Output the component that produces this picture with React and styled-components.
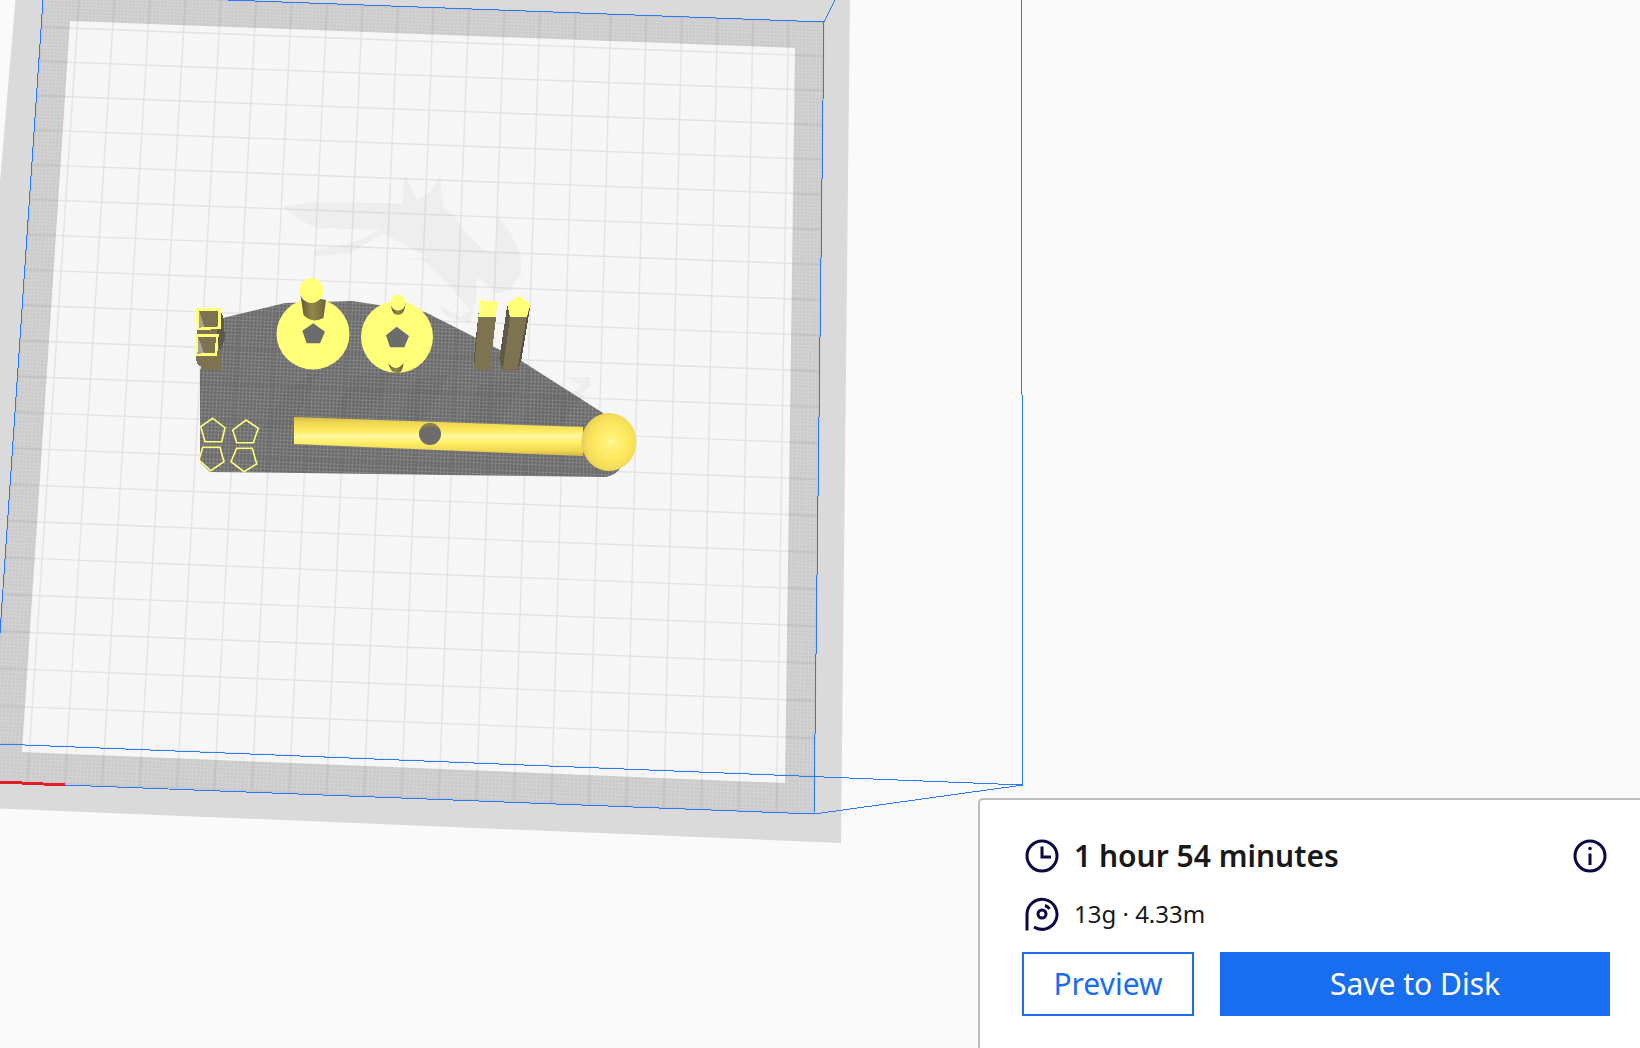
import React from "react";
import styled, { createGlobalStyle } from "styled-components";

const GlobalStyle = createGlobalStyle`
  html, body {
    margin: 0;
    padding: 0;
    background: #fafafa;
    font-family: "Noto Sans", "Open Sans", sans-serif;
  }
`;

const Page = styled.div`
  position: relative;
  width: 1640px;
  height: 1048px;
  overflow: hidden;
  background: #fafafa;
`;

const Viewport = styled.svg`
  display: block;
  width: 1640px;
  height: 1048px;
`;

const Panel = styled.section`
  position: absolute;
  right: 0;
  bottom: 0;
  box-sizing: border-box;
  width: 662px;
  height: 250px;
  padding: 39px 30px 0 42px;
  background: #ffffff;
  border: 2px solid #bcbcbc;
  border-right: none;
  border-bottom: none;
  border-top-left-radius: 5px;
  display: flex;
  flex-direction: column;
`;

const InfoRow = styled.div`
  display: flex;
  align-items: center;
  height: 33px;
  padding: 0 3px 0 3px;
  margin-bottom: ${(props) => props.$gap}px;
  color: #191919;
`;

const IconBox = styled.svg`
  flex: none;
  width: 34px;
  height: 34px;
  color: #0a0840;
`;

const Duration = styled.span`
  flex: 1;
  margin-left: 15px;
  font-size: 30px;
  font-weight: 600;
  line-height: 33px;
  white-space: nowrap;
`;

const Material = styled.span`
  margin-left: 15px;
  font-size: 24px;
  line-height: 33px;
  white-space: nowrap;
`;

const Actions = styled.div`
  display: flex;
  gap: 26px;
  height: 64px;
`;

const ActionButton = styled.button`
  box-sizing: border-box;
  width: ${(props) => (props.$primary ? 390 : 172)}px;
  height: 64px;
  padding: 0;
  border: 2px solid #196ef0;
  border-radius: 0;
  background: ${(props) => (props.$primary ? "#196ef0" : "#ffffff")};
  color: ${(props) => (props.$primary ? "#ffffff" : "#196ef0")};
  font-family: inherit;
  font-size: 30px;
  line-height: 1;
`;

// square -> quad homography, so the bed grid gets the same perspective as the shot
const makeProjector = ([p0, p1, p2, p3]) => {
  const dx1 = p1[0] - p2[0];
  const dx2 = p3[0] - p2[0];
  const dx3 = p0[0] - p1[0] + p2[0] - p3[0];
  const dy1 = p1[1] - p2[1];
  const dy2 = p3[1] - p2[1];
  const dy3 = p0[1] - p1[1] + p2[1] - p3[1];
  const den = dx1 * dy2 - dx2 * dy1;
  const g = (dx3 * dy2 - dx2 * dy3) / den;
  const h = (dx1 * dy3 - dx3 * dy1) / den;
  const a = p1[0] - p0[0] + g * p1[0];
  const b = p3[0] - p0[0] + h * p3[0];
  const d = p1[1] - p0[1] + g * p1[1];
  const e = p3[1] - p0[1] + h * p3[1];
  return (u, v) => {
    const w = g * u + h * v + 1;
    return [(a * u + b * v + p0[0]) / w, (d * u + e * v + p0[1]) / w];
  };
};

const BED = [
  [44, -7],
  [824, 22],
  [814, 814],
  [-10, 781],
];
const project = makeProjector(BED);

const gridPath = (count) => {
  let d = "";
  for (let i = 0; i <= count; i++) {
    const t = i / count;
    const [ax, ay] = project(t, 0);
    const [bx, by] = project(t, 1);
    const [cx, cy] = project(0, t);
    const [ex, ey] = project(1, t);
    d += `M${ax.toFixed(1)} ${ay.toFixed(1)}L${bx.toFixed(1)} ${by.toFixed(1)}`;
    d += `M${cx.toFixed(1)} ${cy.toFixed(1)}L${ex.toFixed(1)} ${ey.toFixed(1)}`;
  }
  return d;
};

const FINE_GRID = gridPath(220);
const COARSE_GRID = gridPath(22);

const pts = (list) => list.join(" ");
// zoom crops were read at 3x, this maps them back to page pixels
const crop = (ox, oy, list) =>
  list.map(([x, y]) => `${(ox + x / 3).toFixed(1)},${(oy + y / 3).toFixed(1)}`).join(" ");

const Z2 = [170, 260];
const Z3 = [400, 260];
const Z8 = [270, 160];
const Z9 = [190, 295];

const YELLOW = "#ffff78";
const OLIVE = "#7d7350";
const OLIVE_DARK = "#5f5a48";
const SHADOW = "#6c6c6c";
const BLUE = "#2a7bf6";

const PENTAGONS = [
  [[128, 475], [165, 503], [155, 545], [105, 545], [92, 500]],
  [[228, 480], [265, 505], [250, 548], [200, 548], [188, 510]],
  [[98, 562], [150, 562], [162, 605], [122, 632], [87, 600]],
  [[200, 565], [247, 565], [260, 612], [222, 635], [183, 605]],
];

const WIRE_LINES = [
  [43, 0, 0, 633],
  [228, 0, 824, 22],
  [824, 22, 835, 0],
  [824, 22, 814, 814],
  [1021, 0, 1023, 785],
  [0, 744, 1023, 785],
  [65, 785, 814, 814],
  [814, 814, 1023, 785],
];

const BedScene = () => (
  <Viewport viewBox="0 0 1640 1048">
    <defs>
      <linearGradient id="rod" x1="0" y1="0" x2="0" y2="1">
        <stop offset="0" stopColor="#d6ba46" />
        <stop offset="0.14" stopColor="#efd652" />
        <stop offset="0.34" stopColor="#fdea5c" />
        <stop offset="0.5" stopColor="#fff9a0" />
        <stop offset="0.66" stopColor="#ffef66" />
        <stop offset="0.86" stopColor="#f0d852" />
        <stop offset="1" stopColor="#d2b644" />
      </linearGradient>
      <radialGradient id="ball" cx="0.54" cy="0.5" r="0.55">
        <stop offset="0" stopColor="#fffbb0" />
        <stop offset="0.14" stopColor="#fff27a" />
        <stop offset="0.55" stopColor="#fde95f" />
        <stop offset="0.85" stopColor="#f3db5a" />
        <stop offset="1" stopColor="#e0c756" />
      </radialGradient>
      <linearGradient id="post" x1="0" y1="0" x2="1" y2="0">
        <stop offset="0" stopColor="#5f5838" />
        <stop offset="0.45" stopColor="#94864c" />
        <stop offset="1" stopColor="#6d653f" />
      </linearGradient>
    </defs>

    {/* disallowed area + bed */}
    <polygon points={pts(["16,-7", "850,-7", "841,843", "-10,808", "-10,300"])} fill="#dadada" />
    <polygon points={pts(BED.map((p) => p.join(",")))} fill="#cbcbcb" />
    <polygon points={pts(["70,21", "795,48", "785,783", "22,752"])} fill="#f6f6f6" />

    {/* ghost logo on the bed */}
    <polygon
      fill="#000"
      fillOpacity="0.035"
      points={crop(Z8[0], Z8[1], [
        [40, 140], [135, 125], [340, 130], [395, 130], [405, 40], [440, 120], [480, 95],
        [510, 45], [520, 140], [560, 170], [575, 205], [640, 270], [680, 280], [680, 165],
        [720, 215], [750, 280], [755, 340], [720, 385], [740, 390], [680, 400], [620, 350],
        [620, 410], [610, 460], [600, 490], [530, 470], [500, 430], [570, 470], [600, 450],
        [540, 380], [460, 300], [400, 300], [470, 290], [340, 220], [240, 280], [135, 288],
        [130, 270], [240, 250], [330, 210], [140, 205], [90, 180],
      ])}
    />
    <polygon
      fill="#000"
      fillOpacity="0.035"
      points={crop(Z3[0], Z3[1], [[490, 352], [570, 350], [570, 380], [540, 405], [520, 395], [545, 375]])}
    />
    <g fill="#000" fillOpacity="0.04">
      <polygon points="262,428 290,385 320,372 290,430" />
      <polygon points="330,420 355,375 395,372 360,430" />
      <polygon points="395,425 415,380 450,372 420,428" />
      <polygon points="460,428 480,385 525,378 495,430" />
      <polygon points="525,425 545,385 585,395 560,425" />
    </g>

    {/* mesh shadow */}
    <path
      fill="#000"
      fillOpacity="0.56"
      d="M223 318L285 303L352 301L425 312L520 360L603 413L622 440Q630 472 606 477L447 475L303 473L210 472L200 462L200 370Z"
    />

    <path d={FINE_GRID} stroke="#fff" strokeOpacity="0.14" strokeWidth="1" fill="none" />
    <path d={COARSE_GRID} stroke="#000" strokeOpacity="0.08" strokeWidth="1.4" fill="none" />

    {/* small square pillars */}
    <g shapeRendering="crispEdges">
      <polygon
        fill={OLIVE}
        points={crop(Z9[0], Z9[1], [[22, 44], [90, 45], [100, 65], [105, 130], [90, 170], [95, 225], [45, 225], [20, 205], [18, 180], [22, 120]])}
      />
      <polygon fill={OLIVE_DARK} points={crop(Z9[0], Z9[1], [[90, 45], [100, 65], [105, 130], [90, 170], [80, 125]])} />
      <polygon fill="#a8a598" points={crop(Z9[0], Z9[1], [[28, 48], [44, 98], [24, 100]])} />
      <polygon fill="#a8a598" points={crop(Z9[0], Z9[1], [[24, 124], [42, 175], [20, 178]])} />
      <g fill="none" stroke={YELLOW} strokeWidth="2.6">
        <polygon points={crop(Z9[0], Z9[1], [[22, 43], [88, 43], [88, 98], [24, 102]])} />
        <polygon points={crop(Z9[0], Z9[1], [[22, 122], [82, 122], [78, 178], [18, 180]])} />
      </g>
    </g>

    {/* disc with tall peg */}
    <ellipse cx="313" cy="334" rx="36.5" ry="35.5" fill={YELLOW} />
    <polygon fill={SHADOW} points={crop(Z2[0], Z2[1], [[430, 190], [465, 215], [450, 250], [410, 250], [397, 212]])} />
    <path d="M300.5 295 L303.5 315 Q312 324 323.5 318 L326 300 Z" fill="url(#post)" />
    <ellipse cx="311.5" cy="290.5" rx="12" ry="12.5" fill={YELLOW} />

    {/* disc with short pegs */}
    <ellipse cx="397" cy="337" rx="36" ry="36" fill={YELLOW} />
    <polygon fill={SHADOW} points={crop(Z2[0], Z2[1], [[680, 200], [717, 228], [703, 262], [660, 262], [648, 226]])} />
    <path d="M391 303 Q391 315 398 315 Q405 315 405.5 303 Z" fill="url(#post)" />
    <ellipse cx="398" cy="302.5" rx="7.5" ry="8" fill={YELLOW} />
    <path d="M388 363 Q391 373 397 373 Q403 373 403.5 363 Q396 373 388 363 Z" fill="url(#post)" />

    {/* tall rectangular posts */}
    <g shapeRendering="crispEdges">
      <polygon fill={OLIVE} points={crop(Z3[0], Z3[1], [[235, 170], [288, 172], [270, 330], [222, 328]])} />
      <polygon fill="#55534a" points={crop(Z3[0], Z3[1], [[238, 135], [235, 170], [222, 328], [221, 300]])} />
      <polygon fill={YELLOW} points={crop(Z3[0], Z3[1], [[240, 120], [292, 125], [288, 172], [235, 170]])} />
      <polygon fill={OLIVE_DARK} points={crop(Z3[0], Z3[1], [[322, 135], [330, 172], [308, 332], [298, 295]])} />
      <polygon fill={OLIVE} points={crop(Z3[0], Z3[1], [[330, 172], [380, 172], [352, 332], [308, 332]])} />
      <polygon fill="#55534a" points={crop(Z3[0], Z3[1], [[380, 172], [392, 133], [364, 300], [352, 332]])} />
      <polygon fill={YELLOW} points={crop(Z3[0], Z3[1], [[358, 107], [392, 133], [380, 172], [330, 172], [322, 130]])} />
    </g>

    {/* pentagon outlines */}
    <g fill="none" stroke={YELLOW} strokeWidth="1.6">
      {PENTAGONS.map((p, idx) => (
        <polygon key={`penta_${idx}`} points={crop(Z2[0], Z2[1], p)} />
      ))}
    </g>

    {/* rod and ball */}
    <polygon points="294,417 583,427 583,456 294,444" fill="url(#rod)" />
    <circle cx="430" cy="434" r="11" fill={SHADOW} />
    <path d="M419.5 431 A11 11 0 0 1 440.5 431 A12 9 0 0 0 419.5 431 Z" fill="#8f8340" />
    <ellipse cx="609" cy="442" rx="27.5" ry="29" fill="url(#ball)" />

    {/* build volume wires */}
    <g stroke={BLUE} strokeWidth="1" shapeRendering="crispEdges">
      {WIRE_LINES.map(([x1, y1, x2, y2], idx) => (
        <line key={`wire_${idx}`} x1={x1} y1={y1} x2={x2} y2={y2} />
      ))}
    </g>
    <line x1="0" y1="782" x2="65" y2="785" stroke="#e01c24" strokeWidth="3" shapeRendering="crispEdges" />
  </Viewport>
);

const ClockIcon = () => (
  <IconBox viewBox="0 0 34 34" fill="none" stroke="currentColor" strokeWidth="3">
    <circle cx="17" cy="17" r="15" />
    <path d="M17 7.5V18H26" />
  </IconBox>
);

const InfoIcon = () => (
  <IconBox viewBox="0 0 34 34" fill="none" stroke="currentColor" strokeWidth="3">
    <circle cx="17" cy="17" r="15" />
    <path d="M17 14.5V26" />
    <circle cx="17" cy="9.5" r="1.8" fill="currentColor" stroke="none" />
  </IconBox>
);

const SpoolIcon = () => (
  <IconBox viewBox="0 0 34 34" fill="none" stroke="currentColor" strokeWidth="3">
    <path d="M2 33.5V17A15 15 0 1 1 9 30" />
    <circle cx="17" cy="17" r="4" />
    <path d="M20 8.5A9 9 0 0 1 24.5 12" />
  </IconBox>
);

const PrintPanel = () => (
  <Panel>
    <InfoRow $gap={25}>
      <ClockIcon />
      <Duration>1 hour 54 minutes</Duration>
      <InfoIcon />
    </InfoRow>
    <InfoRow $gap={22}>
      <SpoolIcon />
      <Material>13g · 4.33m</Material>
    </InfoRow>
    <Actions>
      <ActionButton>Preview</ActionButton>
      <ActionButton $primary>Save to Disk</ActionButton>
    </Actions>
  </Panel>
);

const App = () => (
  <Page>
    <GlobalStyle />
    <BedScene />
    <PrintPanel />
  </Page>
);

export default App;
